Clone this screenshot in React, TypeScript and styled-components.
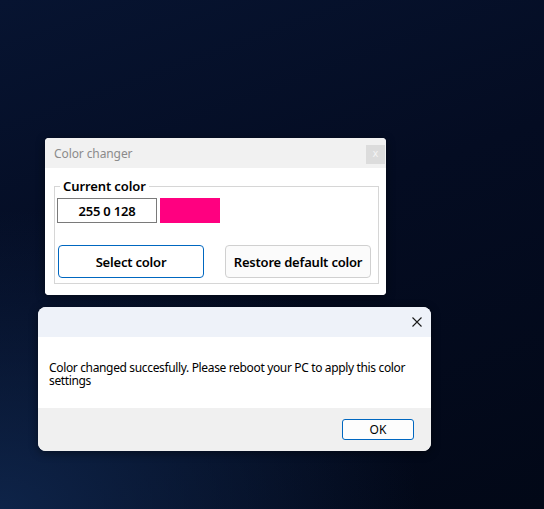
import React from "react";
import styled, { createGlobalStyle } from "styled-components";

const GlobalStyle = createGlobalStyle`
  html, body {
    margin: 0;
    padding: 0;
    width: 544px;
    height: 509px;
    overflow: hidden;
  }
  body {
    font-family: "Noto Sans", "Open Sans", sans-serif;
  }
  * { box-sizing: border-box; }
`;

const Desktop = styled.div`
  position: relative;
  width: 544px;
  height: 509px;
  overflow: hidden;
  background:
    radial-gradient(ellipse 420px 300px at 0% 100%, rgba(16, 40, 80, 0.85), rgba(16, 40, 80, 0) 100%),
    linear-gradient(160deg, #071431 0%, #040c22 45%, #020817 100%);
`;

const Window = styled.div<{ $left: number; $top: number; $w: number; $h: number; $radius: number }>`
  position: absolute;
  left: ${(p) => p.$left}px;
  top: ${(p) => p.$top}px;
  width: ${(p) => p.$w}px;
  height: ${(p) => p.$h}px;
  border-radius: ${(p) => p.$radius}px;
  overflow: hidden;
  display: flex;
  flex-direction: column;
  background: #ffffff;
  box-shadow: 0 2px 10px rgba(0, 0, 0, 0.45);
`;

const TitleBar = styled.div<{ $bg: string }>`
  height: 30px;
  flex: none;
  display: flex;
  align-items: center;
  background: ${(p) => p.$bg};
`;

const TitleText = styled.div`
  flex: 1;
  padding-left: 9px;
  font-size: 12px;
  color: #8b8b8b;
  letter-spacing: -0.1px;
`;

const SmallClose = styled.div`
  width: 19px;
  height: 19px;
  margin: 2px 1px 0 0;
  background: #dcdcdc;
  color: #f4f4f4;
  font-size: 10px;
  line-height: 18px;
  text-align: center;
  font-family: "DejaVu Sans", sans-serif;
`;

const Body1 = styled.div`
  flex: 1;
  padding: 10px 7px 0 9px;
  background: #ffffff;
`;

const GroupBox = styled.fieldset`
  margin: 0;
  height: 106px;
  padding: 0 2px 5px 2px;
  border: 1px solid #d6d6d6;
  display: flex;
  flex-direction: column;
  min-width: 0;
`;

const Legend = styled.legend`
  margin-left: 3px;
  padding: 0 3px;
  font-size: 13px;
  font-weight: 600;
  line-height: 16px;
  color: #000;
  letter-spacing: -0.1px;
`;

const ColorRow = styled.div`
  display: flex;
  gap: 3px;
  margin-top: 4px;
`;

const ValueBox = styled.div`
  width: 100px;
  height: 25px;
  border: 1px solid #7a7a7a;
  display: flex;
  align-items: center;
  justify-content: center;
  font-size: 13px;
  font-weight: 600;
  color: #000;
  letter-spacing: -0.2px;
`;

const Swatch = styled.div<{ $color: string }>`
  width: 60px;
  height: 25px;
  background: ${(p) => p.$color};
`;

const ButtonRow = styled.div`
  display: flex;
  justify-content: space-between;
  margin: auto 5px 0 1px;
`;

const WinButton = styled.button<{ $primary?: boolean }>`
  width: 146px;
  height: 33px;
  border-radius: 4px;
  border: 1px solid ${(p) => (p.$primary ? "#0067c0" : "#d0d0d0")};
  background: ${(p) => (p.$primary ? "#ffffff" : "#fbfbfb")};
  font-family: "Noto Sans", "Open Sans", sans-serif;
  font-size: 13px;
  font-weight: 600;
  color: #000;
  letter-spacing: -0.2px;
  padding: 0;
`;

const CloseIconBox = styled.div`
  width: 10px;
  height: 10px;
  margin-right: 9px;
  display: flex;
`;

const MsgBody = styled.div`
  height: 71px;
  flex: none;
  padding: 24px 20px 0 11px;
  background: #ffffff;
  font-size: 12px;
  line-height: 13px;
  letter-spacing: -0.35px;
  color: #000;
`;

const Footer = styled.div`
  flex: 1;
  background: #f0f0f0;
  display: flex;
  align-items: center;
  justify-content: flex-end;
  padding-right: 17px;
`;

const OkButton = styled.button`
  width: 72px;
  height: 21px;
  border: 1px solid #0067c0;
  border-radius: 3px;
  background: #fdfdfd;
  font-family: "Noto Sans", "Open Sans", sans-serif;
  font-size: 12px;
  color: #000;
  padding: 0;
`;

export default function App() {
  return (
    <>
      <GlobalStyle />
      <Desktop>
        <Window $left={45} $top={138} $w={341} $h={157} $radius={4}>
          <TitleBar $bg="#f1f1f1">
            <TitleText>Color changer</TitleText>
            <SmallClose>x</SmallClose>
          </TitleBar>
          <Body1>
            <GroupBox>
              <Legend>Current color</Legend>
              <ColorRow>
                <ValueBox>255 0 128</ValueBox>
                <Swatch $color="#ff0080" />
              </ColorRow>
              <ButtonRow>
                <WinButton $primary>Select color</WinButton>
                <WinButton>Restore default color</WinButton>
              </ButtonRow>
            </GroupBox>
          </Body1>
        </Window>

        <Window $left={38} $top={307} $w={393} $h={144} $radius={8}>
          <TitleBar $bg="#eef2f9">
            <TitleText />
            <CloseIconBox>
              <svg width="10" height="10" viewBox="0 0 10 10">
                <path d="M0.5 0.5 L9.5 9.5 M9.5 0.5 L0.5 9.5" stroke="#1a1a1a" strokeWidth="1.1" fill="none" />
              </svg>
            </CloseIconBox>
          </TitleBar>
          <MsgBody>
            Color changed succesfully. Please reboot your PC to apply this color settings
          </MsgBody>
          <Footer>
            <OkButton>OK</OkButton>
          </Footer>
        </Window>
      </Desktop>
    </>
  );
}
